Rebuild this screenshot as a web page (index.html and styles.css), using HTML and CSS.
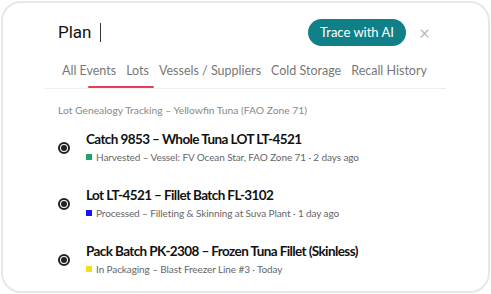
FILE: index.html
```html
<!DOCTYPE html>
<html lang="en">
<head>
  <meta charset="UTF-8">
  <title>Trace</title>
  <link rel="stylesheet" href="styles.css">
</head>
<body>

  <div class="panel">
    <div class="search-row">
      <div class="query">Plan <span class="caret"></span></div>
      <button class="trace-btn">Trace with AI</button>
      <span class="close">&times;</span>
    </div>

    <div class="tabs">
      <span class="tab">All Events</span>
      <span class="tab active">Lots</span>
      <span class="tab">Vessels / Suppliers</span>
      <span class="tab">Cold Storage</span>
      <span class="tab">Recall History</span>
      <span class="indicator"></span>
    </div>

    <p class="section-label">Lot Genealogy Tracking – Yellowfin Tuna (FAO Zone 71)</p>

    <ul class="events">
      <li class="event">
        <span class="radio"></span>
        <div class="event-body">
          <div class="event-title">Catch 9853 – Whole Tuna LOT LT-4521</div>
          <div class="event-meta"><span class="dot green"></span>Harvested – Vessel: FV Ocean Star, FAO Zone 71 · 2 days ago</div>
        </div>
      </li>
      <li class="event">
        <span class="radio"></span>
        <div class="event-body">
          <div class="event-title">Lot LT-4521 – Fillet Batch FL-3102</div>
          <div class="event-meta"><span class="dot blue"></span>Processed – Filleting &amp; Skinning at Suva Plant · 1 day ago</div>
        </div>
      </li>
      <li class="event">
        <span class="radio"></span>
        <div class="event-body">
          <div class="event-title">Pack Batch PK-2308 – Frozen Tuna Fillet (Skinless)</div>
          <div class="event-meta"><span class="dot yellow"></span>In Packaging – Blast Freezer Line #3 · Today</div>
        </div>
      </li>
    </ul>
  </div>

</body>
</html>
```

FILE: styles.css
```css
body {
  margin: 0;
  background: #fff;
  font-family: Lato, "Noto Sans", sans-serif;
}
.panel {
  box-sizing: border-box;
  width: 489px;
  height: 292px;
  margin: 1px;
  border: 2px solid #e7e7e7;
  border-radius: 20px;
  background: #fff;
  padding: 0 42px;
  overflow: hidden;
}
.search-row {
  display: flex;
  align-items: center;
  height: 58px;
  padding: 0 16px 0 13px;
}
.query {
  flex: 1;
  font-family: Roboto, sans-serif;
  font-size: 17px;
  color: #111;
  display: flex;
  align-items: center;
  gap: 8px;
}
.caret {
  display: inline-block;
  width: 1.5px;
  height: 19px;
  background: #333;
}
.trace-btn {
  border: none;
  background: #0f7f88;
  color: #fff;
  font-family: inherit;
  font-size: 13px;
  height: 27px;
  padding: 0 12px;
  border-radius: 14px;
}
.close {
  margin-left: 13px;
  color: #bbb;
  font-size: 19px;
  line-height: 1;
}
.tabs {
  position: relative;
  display: flex;
  gap: 10px;
  padding: 2px 0 0 17px;
  height: 25px;
  border-bottom: 1px solid #eee;
  font-size: 12.5px;
  color: #777;
}
.tab {
  white-space: nowrap;
}
.indicator {
  position: absolute;
  left: 43px;
  bottom: 0;
  width: 66px;
  height: 2px;
  background: #e0405a;
  border-radius: 1px;
}
.section-label {
  margin: 15px 0 0 13px;
  font-size: 10.3px;
  color: #888;
}
.events {
  list-style: none;
  margin: 3px 0 0 0;
  padding: 0 0 0 13px;
}
.event {
  display: flex;
  align-items: center;
  gap: 16px;
  height: 56px;
}
.radio {
  box-sizing: border-box;
  width: 12px;
  height: 12px;
  border: 2px solid #222;
  border-radius: 50%;
  display: flex;
  align-items: center;
  justify-content: center;
  margin-top: 2px;
}
.radio::after {
  content: "";
  width: 6px;
  height: 6px;
  border-radius: 50%;
  background: #222;
}
.event-title {
  font-size: 13.5px;
  font-weight: 700;
  letter-spacing: -0.6px;
  color: #111;
}
.event-meta {
  margin-top: 4px;
  font-size: 10px;
  letter-spacing: -0.1px;
  color: #666;
  display: flex;
  align-items: center;
  gap: 4px;
}
.dot {
  width: 6px;
  height: 6px;
}
.green { background: #22a06b; }
.blue { background: #1515ee; }
.yellow { background: #f3e01a; }
```
